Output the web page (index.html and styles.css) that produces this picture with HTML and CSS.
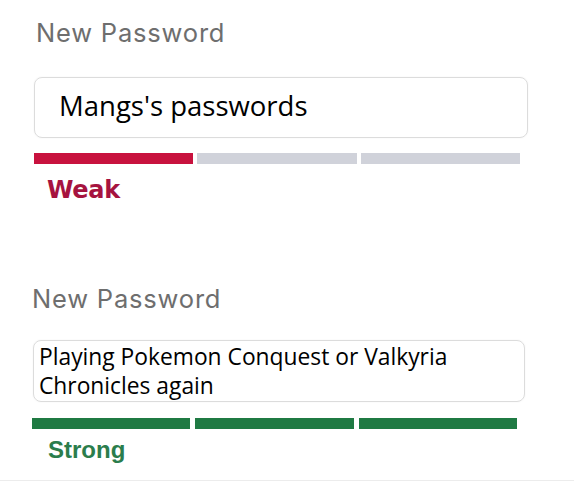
FILE: index.html
```html
<!DOCTYPE html>
<html>
<head>
<meta charset="utf-8">
<link rel="stylesheet" href="styles.css">
</head>
<body>
<div class="page">
  <section class="field field-weak">
    <div class="label">New Password</div>
    <div class="box box-single">Mangs's passwords</div>
    <div class="meter">
      <span class="seg on"></span>
      <span class="seg"></span>
      <span class="seg"></span>
    </div>
    <div class="strength">Weak</div>
  </section>
  <section class="field field-strong">
    <div class="label">New Password</div>
    <div class="box box-multi">Playing Pokemon Conquest or Valkyria Chronicles again</div>
    <div class="meter">
      <span class="seg on"></span>
      <span class="seg on"></span>
      <span class="seg on"></span>
    </div>
    <div class="strength">Strong</div>
  </section>
  <div class="rule"></div>
</div>
</body>
</html>
```

FILE: styles.css
```css
html, body {
  margin: 0;
  padding: 0;
  background: #ffffff;
}
.page {
  width: 574px;
  height: 485px;
  display: flex;
  flex-direction: column;
  overflow: hidden;
}
.field {
  display: flex;
  flex-direction: column;
}
.label {
  font-family: "Inter", "Liberation Sans", sans-serif;
  font-size: 25.5px;
  line-height: 30px;
  color: #6e6e6e;
  letter-spacing: 0.8px;
}
.box {
  border: 1.5px solid #dcdcdc;
  border-radius: 8px;
  box-sizing: border-box;
  font-family: "Open Sans", "Noto Sans", sans-serif;
  color: #000;
  box-shadow: 0 0 2px rgba(0,0,0,0.06);
}
.meter {
  display: flex;
  gap: 4px;
}
.seg {
  flex: 1;
  height: 11px;
  background: #d0d2da;
}
.strength {
  font-weight: 700;
  line-height: 28px;
}

/* weak */
.field-weak {
  padding: 18px 0 0 36px;
}
.field-weak .box-single {
  margin: 29px 0 0 -2px;
  width: 494px;
  height: 61px;
  padding: 9px 0 0 24px;
  font-size: 27.5px;
  line-height: 38px;
}
.field-weak .meter {
  margin: 15px 0 0 -2px;
  width: 486px;
}
.field-weak .seg.on { background: #c8123e; }
.field-weak .strength {
  margin: 12px 0 0 11px;
  font-family: "DejaVu Sans", "Liberation Sans", sans-serif;
  font-size: 24px;
  letter-spacing: -0.3px;
  color: #a6133f;
}

/* strong */
.field-strong {
  padding: 80px 0 0 32px;
}
.field-strong .box-multi {
  margin: 26px 0 0 1px;
  width: 492px;
  height: 62px;
  padding: 1px 20px 0 5px;
  font-size: 22.8px;
  line-height: 29px;
}
.field-strong .meter {
  margin: 16px 0 0 0;
  width: 485px;
  gap: 5px;
}
.field-strong .seg.on { background: #1f7a43; }
.field-strong .strength {
  margin: 7px 0 0 16px;
  font-family: "Liberation Sans", Arial, sans-serif;
  font-size: 24px;
  color: #2b7d4c;
}
.rule {
  margin-top: auto;
  margin-bottom: 4px;
  height: 1px;
  background: #ececec;
}
```
